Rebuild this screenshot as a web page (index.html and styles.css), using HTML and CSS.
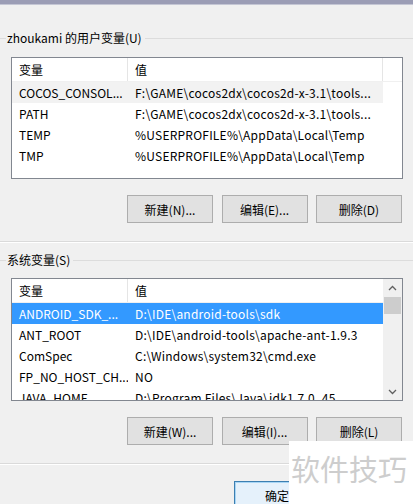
FILE: index.html
```html
<!DOCTYPE html>
<html lang="zh-CN">
<head>
<meta charset="utf-8">
<title>环境变量</title>
<link rel="stylesheet" href="styles.css">
</head>
<body>
<div class="titlebar"></div>

<div class="legend legend-1"><span>zhoukami 的用户变量(U)</span></div>
<div class="listbox listbox-1">
  <div class="header">
    <div class="c1">变量</div><div class="c2">值</div><div class="c3"></div>
  </div>
  <div class="row hover"><div class="c1">COCOS_CONSOL...</div><div class="c2">F:\GAME\cocos2dx\cocos2d-x-3.1\tools...</div></div>
  <div class="row"><div class="c1">PATH</div><div class="c2">F:\GAME\cocos2dx\cocos2d-x-3.1\tools...</div></div>
  <div class="row"><div class="c1">TEMP</div><div class="c2">%USERPROFILE%\AppData\Local\Temp</div></div>
  <div class="row"><div class="c1">TMP</div><div class="c2">%USERPROFILE%\AppData\Local\Temp</div></div>
</div>
<div class="buttons">
  <div class="btn">新建(N)...</div>
  <div class="btn">编辑(E)...</div>
  <div class="btn">删除(D)</div>
</div>

<div class="sep sep-1"></div>

<div class="legend legend-2"><span>系统变量(S)</span></div>
<div class="listbox listbox-2">
  <div class="rows">
    <div class="header">
      <div class="c1">变量</div><div class="c2">值</div>
    </div>
    <div class="row selected"><div class="c1">ANDROID_SDK_...</div><div class="c2">D:\IDE\android-tools\sdk</div></div>
    <div class="row"><div class="c1">ANT_ROOT</div><div class="c2">D:\IDE\android-tools\apache-ant-1.9.3</div></div>
    <div class="row"><div class="c1">ComSpec</div><div class="c2">C:\Windows\system32\cmd.exe</div></div>
    <div class="row"><div class="c1">FP_NO_HOST_CH...</div><div class="c2">NO</div></div>
    <div class="row"><div class="c1">JAVA_HOME</div><div class="c2">D:\Program Files\Java\jdk1.7.0_45</div></div>
  </div>
  <div class="scrollbar">
    <svg class="arrow" width="17" height="17" viewBox="0 0 17 17"><path d="M5 10 L8.5 6.5 L12 10" fill="none" stroke="#606060" stroke-width="1.3"/></svg>
    <div class="track"><div class="thumb"></div></div>
    <svg class="arrow" width="17" height="17" viewBox="0 0 17 17"><path d="M5 7 L8.5 10.5 L12 7" fill="none" stroke="#606060" stroke-width="1.3"/></svg>
  </div>
</div>
<div class="buttons">
  <div class="btn">新建(W)...</div>
  <div class="btn">编辑(I)...</div>
  <div class="btn">删除(L)</div>
</div>

<div class="sep sep-2"></div>

<div class="footer">
  <div class="btn btn-default">确定</div>
</div>

<div class="watermark">软件技巧</div>
</body>
</html>
```

FILE: styles.css
```css
* { box-sizing: border-box; }

html, body {
  margin: 0;
  padding: 0;
  height: 504px;
  overflow: hidden;
}

body {
  background: #f0f0f0;
  font-family: "Noto Sans CJK SC", "Noto Sans", sans-serif;
  font-size: 12px;
  color: #000;
  position: relative;
}

.titlebar {
  height: 5px;
  background: #9b9db5;
  border-bottom: 1px solid #c4c6d4;
}

.legend {
  height: 16px;
  display: flex;
  align-items: center;
  line-height: 16px;
  white-space: nowrap;
}
.legend::before {
  content: "";
  width: 6px;
  height: 1px;
  background: #dcdcdc;
}
.legend::after {
  content: "";
  flex: 1;
  height: 1px;
  background: #dcdcdc;
  margin-left: 3px;
}
.legend span { padding-left: 1px; }

.legend-1 { margin-top: 25px; }
.legend-2 { margin-top: 9px; }

.listbox {
  margin: 11px 10px 0 11px;
  background: #fff;
  border: 1px solid #828790;
  overflow: hidden;
}
.listbox-1 { height: 122px; }
.listbox-2 {
  height: 123px;
  margin-top: 10px;
  display: flex;
}
.listbox-2 .rows { flex: 1; overflow: hidden; }

.header {
  display: flex;
  height: 24px;
  align-items: center;
  border-bottom: 1px solid #f0f0f0;
}
.header .c1,
.header .c2 {
  height: 100%;
  display: flex;
  align-items: center;
  border-right: 1px solid #e5e5e5;
}
.header .c3 { flex: 1; }

.c1 {
  width: 116px;
  padding-left: 7px;
  white-space: nowrap;
  overflow: hidden;
}
.c2 {
  width: 255px;
  padding-left: 7px;
  white-space: nowrap;
  overflow: hidden;
  letter-spacing: 0.22px;
}
.listbox-2 .c2 { width: auto; flex: 1; }
.listbox-2 .header .c2 { border-right: none; }

.row {
  display: flex;
  height: 21px;
  align-items: center;
  width: 371px;
}
.listbox-2 .row { width: auto; }
.row.hover { background: #f2f2f2; }
.row.selected { background: #3399ff; color: #fff; }

.scrollbar {
  width: 19px;
  display: flex;
  flex-direction: column;
  background: #f0f0f0;
  padding: 0 1px;
}
.arrow { display: block; flex: none; }
.scrollbar .arrow:first-child { margin-top: 1px; }
.track { flex: 1; }
.thumb {
  height: 17px;
  background: #cdcdcd;
}

.buttons {
  display: flex;
  justify-content: flex-end;
  gap: 8.5px;
  margin: 16px 11px 0 0;
}

.btn {
  width: 86px;
  height: 28px;
  display: flex;
  align-items: center;
  justify-content: center;
  background: #e1e1e1;
  border: 1px solid #adadad;
}

.sep {
  height: 2px;
  margin-top: 18px;
  border-top: 1px solid #dadada;
  border-bottom: 1px solid #ffffff;
}
.sep-2 { margin-top: 18px; }

.footer {
  display: flex;
  margin-top: 16px;
  padding-left: 234px;
}
.btn-default {
  border-color: #3c7fb1;
  box-shadow: inset 0 0 0 1px #a9d6f5;
  background: #e5f1fb;
}

.watermark {
  position: absolute;
  left: 289px;
  top: 441px;
  right: 0;
  bottom: 0;
  background: #fff;
  color: #cdcdcd;
  font-size: 29px;
  line-height: 54px;
  padding-left: 2px;
  white-space: nowrap;
}
```
